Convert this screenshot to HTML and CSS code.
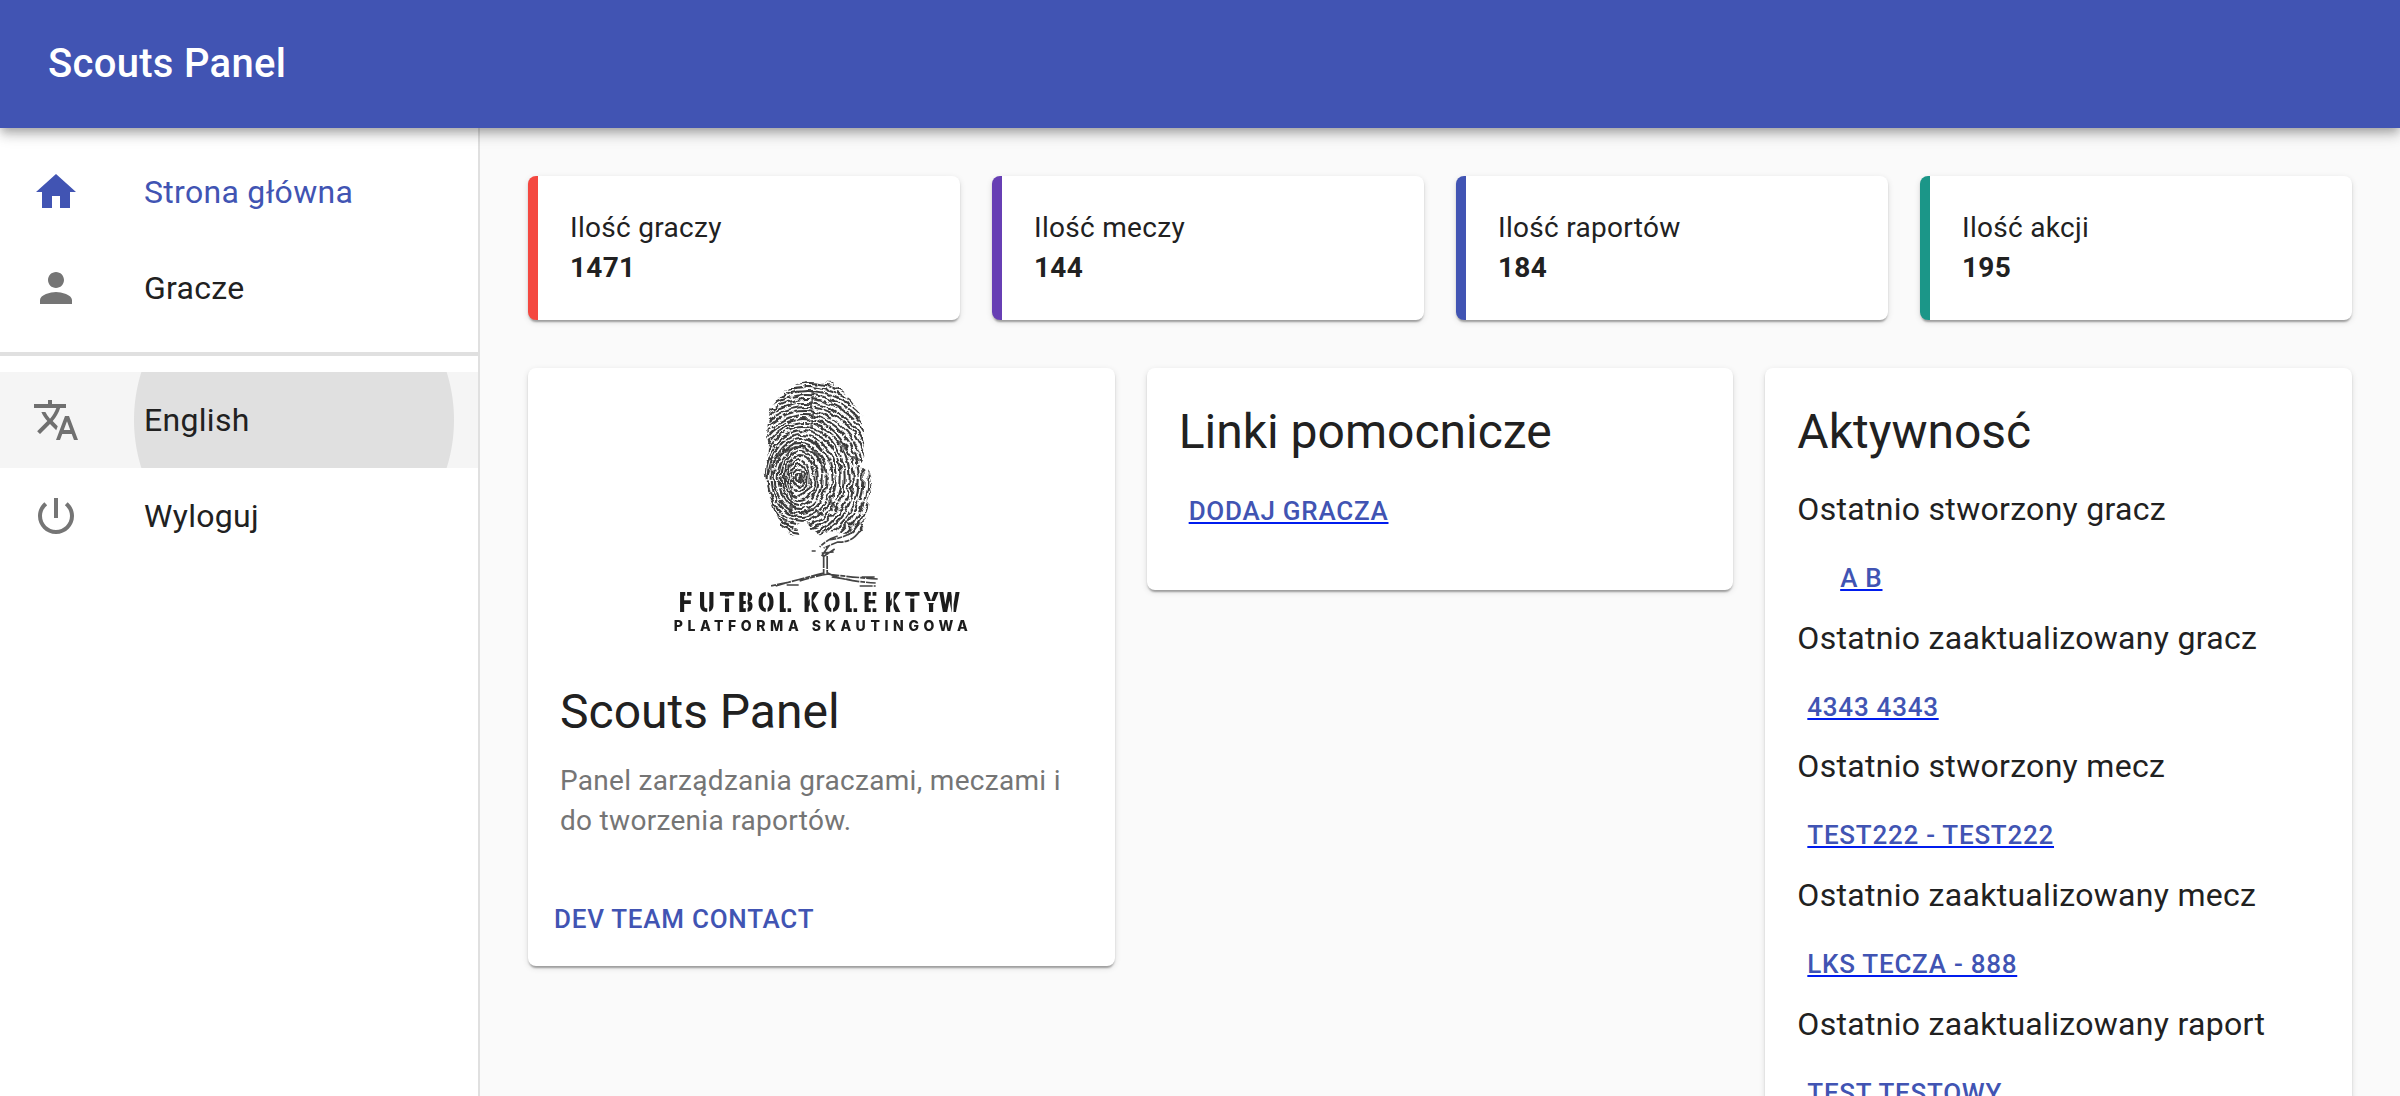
FILE: index.html
```html
<!DOCTYPE html>
<html lang="pl">
<head>
<meta charset="utf-8">
<title>Scouts Panel</title>
<link rel="stylesheet" href="styles.css">
</head>
<body>
<header class="appbar"><h1 class="appbar-title">Scouts Panel</h1></header>
<div class="shell">
  <nav class="drawer">
    <ul class="nav-list">
      <li class="nav-item nav-item--active">
        <svg class="nav-icon" viewBox="0 0 24 24"><path d="M10 20v-6h4v6h5v-8h3L12 3 2 12h3v8z"/></svg>
        <span>Strona główna</span>
      </li>
      <li class="nav-item">
        <svg class="nav-icon" viewBox="0 0 24 24"><path d="M12 12c2.21 0 4-1.79 4-4s-1.79-4-4-4-4 1.79-4 4 1.79 4 4 4zm0 2c-2.67 0-8 1.34-8 4v2h16v-2c0-2.66-5.33-4-8-4z"/></svg>
        <span>Gracze</span>
      </li>
    </ul>
    <hr class="divider">
    <ul class="nav-list">
      <li class="nav-item nav-item--pressed">
        <svg class="nav-icon" viewBox="0 0 24 24"><path d="M12.87 15.07l-2.54-2.51.03-.03c1.74-1.94 2.98-4.17 3.71-6.53H17V4h-7V2H8v2H1v1.99h11.17C11.5 7.92 10.44 9.75 9 11.35 8.07 10.32 7.3 9.19 6.69 8h-2c.73 1.63 1.73 3.17 2.98 4.56l-5.09 5.02L4 19l5-5 3.11 3.11.76-2.04zM18.5 10h-2L12 22h2l1.12-3h4.75L21 22h2l-4.5-12zm-2.62 7l1.62-4.33L19.12 17h-3.24z"/></svg>
        <span>English</span>
      </li>
      <li class="nav-item">
        <svg class="nav-icon" viewBox="0 0 24 24"><path d="M13 3h-2v10h2V3zm4.83 2.17l-1.42 1.42C17.99 7.86 19 9.81 19 12c0 3.87-3.13 7-7 7s-7-3.13-7-7c0-2.19 1.01-4.14 2.58-5.42L6.17 5.17C4.23 6.82 3 9.26 3 12c0 4.97 4.03 9 9 9s9-4.03 9-9c0-2.74-1.23-5.18-3.17-6.83z"/></svg>
        <span>Wyloguj</span>
      </li>
    </ul>
  </nav>
  <main class="content">
    <section class="stats">
      <div class="paper stat stat--red"><span>Ilość graczy</span><strong>1471</strong></div>
      <div class="paper stat stat--purple"><span>Ilość meczy</span><strong>144</strong></div>
      <div class="paper stat stat--indigo"><span>Ilość raportów</span><strong>184</strong></div>
      <div class="paper stat stat--teal"><span>Ilość akcji</span><strong>195</strong></div>
    </section>
    <section class="cards">
      <article class="paper">
        <svg class="logo" viewBox="661.33 368 320 280">
          <defs>
            <clipPath id="thumb"><path d="M815 381L832 382 846 393 857 407 862 418 864 440 866 452 860 466 870 473 872 487 868 502 866 520 862 531 846 534 832 531 822 535 812 529 803 521 796 525 801 534 791 535 782 527 775 513 769 494 765 475 767 453 768 425 771 408 782 394 798 384z"/></clipPath>
            <filter id="rough" filterUnits="userSpaceOnUse" x="740" y="370" width="160" height="225">
              <feTurbulence type="fractalNoise" baseFrequency=".11" numOctaves="2" seed="8" result="n"/>
              <feDisplacementMap in="SourceGraphic" in2="n" scale="7" xChannelSelector="R" yChannelSelector="G"/>
              <feGaussianBlur stdDeviation=".6"/>
            </filter>
          </defs>
          <g filter="url(#rough)">
            <g clip-path="url(#thumb)">
              <g class="ridges">
                <ellipse cx="799" cy="478" rx="2" ry="4"/>
                <ellipse cx="799" cy="478" rx="5" ry="9"/>
                <ellipse cx="799" cy="478" rx="8" ry="14"/>
                <ellipse cx="799" cy="478" rx="11" ry="19"/>
                <ellipse cx="800" cy="478" rx="15" ry="23"/>
                <ellipse cx="800" cy="478" rx="18" ry="27"/>
                <ellipse cx="801" cy="478" rx="22" ry="31"/>
                <ellipse cx="801" cy="478" rx="26" ry="35"/>
                <ellipse cx="802" cy="478" rx="30" ry="39"/>
                <ellipse cx="802" cy="478" rx="34" ry="43"/>
                <ellipse cx="803" cy="478" rx="38" ry="47"/>
                <ellipse cx="803" cy="478" rx="42" ry="51"/>
                <ellipse cx="804" cy="478" rx="46" ry="55"/>
                <ellipse cx="804" cy="478" rx="50" ry="59"/>
                <ellipse cx="805" cy="478" rx="54" ry="63"/>
                <ellipse cx="805" cy="478" rx="58" ry="67"/>
                <ellipse cx="806" cy="478" rx="62" ry="71"/>
                <ellipse cx="806" cy="478" rx="66" ry="75"/>
                <ellipse cx="807" cy="478" rx="70" ry="79"/>
                <ellipse cx="807" cy="478" rx="74" ry="83"/>
                <ellipse cx="808" cy="478" rx="78" ry="87"/>
                <ellipse cx="808" cy="478" rx="82" ry="91"/>
                <ellipse cx="809" cy="478" rx="86" ry="95"/>
                <ellipse cx="809" cy="478" rx="90" ry="99"/>
              </g>
              <path class="smudge" d="M768 476Q774 452 798 447M780 455l12-7M799 446l20 8M817 453l8 20M793 492l-3 22M829 500l12 12M852 458l12 4M800 476l3 5M784 518l5 9M849 525l14-2M812 390v40M838 440l10 10M808 508l16 6"/>
            </g>
          </g>
          <path class="trunk" d="M860 531Q852 543 838 542L824 548M855 531Q842 539 828 540M838 536Q828 539 820 547M835 549L823 557M834 552L822 553M829 546l-7 10M824 555V574M827.500 556V574M824 573Q800 579 776 586M827 574Q850 577 878 579M790 582L771 586M828 573Q842 581 876 583M832 577l20 3M862 577h14M816 551h-4M860 586h16M787 585h12M829 574Q815 576 800 581"/>
          <g class="wordmark">
            <text class="wordmark-name" transform="translate(679 612) scale(.86 1)" x="0 23.500 47.500 69 92 116">FUTBOL</text>
            <text class="wordmark-name" transform="translate(803.500 612) scale(.86 1)" x="0 24 48 70 95 118 140 158">KOLEKTYW</text>
            <path class="stencil" d="M686.500 590v8M708.500 604v9M720 597.500h17M747 590v23M767 589v8M767 607v8M787 606v8M811 590v24M832.500 589v8M832.500 607v8M853 606v8M872 590v8M872 606v8M893 590v24M905 597.500h17M927 602h14M953 590v24"/>
            <text class="wordmark-sub" x="674" y="631" textLength="125">PLATFORMA</text>
            <text class="wordmark-sub" x="812" y="631" textLength="156">SKAUTINGOWA</text>
          </g>
        </svg>
        <div class="card-body">
          <h2 class="card-title">Scouts Panel</h2>
          <p class="card-text">Panel zarządzania graczami, meczami i do tworzenia raportów.</p>
        </div>
        <div class="card-actions"><a class="button">Dev team contact</a></div>
      </article>
      <article class="paper">
        <div class="card-body card-body--last">
          <h2 class="card-title">Linki pomocnicze</h2>
          <a class="button button--link">Dodaj gracza</a>
        </div>
      </article>
      <article class="paper">
        <div class="card-body card-body--last">
          <h2 class="card-title">Aktywnosć</h2>
          <h3 class="card-subtitle">Ostatnio stworzony gracz</h3>
          <a class="button button--link">A B</a>
          <h3 class="card-subtitle">Ostatnio zaaktualizowany gracz</h3>
          <a class="button button--link">4343 4343</a>
          <h3 class="card-subtitle">Ostatnio stworzony mecz</h3>
          <a class="button button--link">test222 - test222</a>
          <h3 class="card-subtitle">Ostatnio zaaktualizowany mecz</h3>
          <a class="button button--link">LKS Tecza - 888</a>
          <h3 class="card-subtitle">Ostatnio zaaktualizowany raport</h3>
          <a class="button button--link">Test Testowy</a>
        </div>
      </article>
    </section>
  </main>
</div>
</body>
</html>
```
FILE: styles.css
```css
* { box-sizing: border-box; }

body {
  margin: 0;
  height: 1096px;
  overflow: hidden;
  display: flex;
  flex-direction: column;
  background: #fafafa;
  color: #212121;
  font: 400 28px/1.43 Roboto, "Liberation Sans", sans-serif;
  letter-spacing: .01071em;
}

h1, h2, h3, p, ul { margin: 0; padding: 0; }

.appbar {
  position: relative;
  z-index: 1;
  flex: none;
  height: 128px;
  padding: 0 48px;
  display: flex;
  align-items: center;
  background: #4154b3;
  color: #fff;
  box-shadow: 0 4px 8px -2px rgba(0,0,0,.2), 0 8px 10px rgba(0,0,0,.14), 0 2px 20px rgba(0,0,0,.12);
}
.appbar-title { font-size: 40px; font-weight: 500; line-height: 1.6; letter-spacing: .0075em; }

.shell { flex: 1; min-height: 0; display: flex; }

.drawer { flex: none; width: 480px; background: #fff; border-right: 2px solid #e0e0e0; }
.nav-list { list-style: none; padding: 16px 0; }
.nav-item {
  height: 96px;
  padding: 0 32px;
  display: flex;
  align-items: center;
  gap: 64px;
  font-size: 32px;
  line-height: 1.5;
  letter-spacing: .00938em;
}
.nav-icon { width: 48px; height: 48px; fill: #757575; }
.nav-item--active { color: #4154b3; }
.nav-item--active .nav-icon { fill: #4154b3; }
.nav-item--pressed { background: radial-gradient(circle 160px at 294px 48px, #e0e0e0 159.5px, #f5f5f5 160.5px); }
.nav-item--pressed .nav-icon { fill: #707070; }
.divider { height: 4px; margin: 0; border: 0; background: #e0e0e0; }

.content { flex: 1; padding: 48px; display: flex; flex-direction: column; gap: 48px; }
.paper {
  background: #fff;
  border-radius: 8px;
  box-shadow: 0 4px 2px -2px rgba(0,0,0,.2), 0 2px 2px rgba(0,0,0,.14), 0 2px 6px rgba(0,0,0,.12);
}

.stats { display: grid; grid-template-columns: repeat(4, 1fr); gap: 32px; }
.stat { height: 144px; padding: 32px; display: flex; flex-direction: column; border-left: 10px solid; }
.stat > * { color: #212121; }
.stat--red { border-color: #f44840; }
.stat--purple { border-color: #673fb4; }
.stat--indigo { border-color: #4154b3; }
.stat--teal { border-color: #1b9688; }

.cards { display: grid; grid-template-columns: repeat(3, 1fr); gap: 32px; align-items: start; }
.card-body { padding: 32px; }
.card-body--last { padding-bottom: 48px; }
.card-title { margin-bottom: .35em; font-size: 48px; font-weight: 400; line-height: 1.334; letter-spacing: 0; }
.card-subtitle { margin-bottom: .35em; font-size: 32px; font-weight: 400; line-height: 1.75; letter-spacing: .00938em; }
.card-text { color: #757575; }
.card-actions { padding: 16px; display: flex; }

.button {
  display: block;
  width: fit-content;
  min-width: 128px;
  padding: 8px 10px;
  color: #4154b3;
  font-size: 26px;
  font-weight: 500;
  line-height: 1.75;
  letter-spacing: .02857em;
  text-align: center;
  text-transform: uppercase;
}
.button--link { text-decoration: underline #001cee; }

.logo { display: block; width: 320px; height: 280px; margin: 0 auto; }
.ridges { fill: none; stroke: #3a3a3a; stroke-width: 2.1; stroke-dasharray: 23 1.2 11 1 37 1.4 7 1; }
.smudge { fill: none; stroke: #333; stroke-width: 2.6; stroke-dasharray: 6 1; opacity: .75; }
.trunk { fill: none; stroke: #444; stroke-width: 1.7; stroke-dasharray: 13 1 5 1; filter: blur(.5px); }
.wordmark { fill: #1c1c1c; filter: blur(.7px); letter-spacing: 0; }
.wordmark-name { font: 900 28px Roboto, sans-serif; }
.wordmark-sub { font: 800 14px Inter, sans-serif; }
.stencil { fill: none; stroke: #fff; stroke-width: 1.8; }
```
